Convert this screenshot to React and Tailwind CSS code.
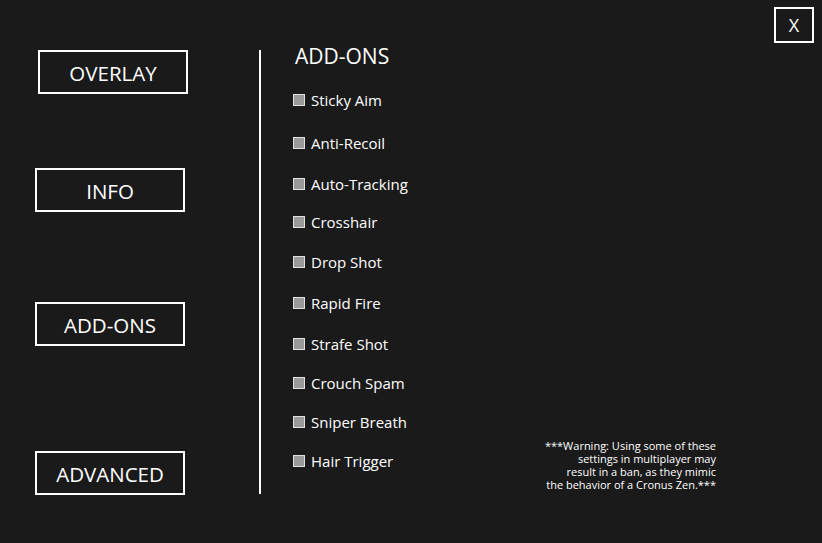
const navItems = [
  { label: 'OVERLAY', cls: 'mt-[50px] ml-[38px]' },
  { label: 'INFO', cls: 'mt-[74px] ml-[35px]' },
  { label: 'ADD-ONS', cls: 'mt-[90px] ml-[35px]' },
  { label: 'ADVANCED', cls: 'mt-[105px] ml-[35px]' },
]

const addons = [
  { label: 'Sticky Aim', cls: 'mt-[20px]' },
  { label: 'Anti-Recoil', cls: 'mt-[23px]' },
  { label: 'Auto-Tracking', cls: 'mt-[21px]' },
  { label: 'Crosshair', cls: 'mt-[18px]' },
  { label: 'Drop Shot', cls: 'mt-[20px]' },
  { label: 'Rapid Fire', cls: 'mt-[21px]' },
  { label: 'Strafe Shot', cls: 'mt-[21px]' },
  { label: 'Crouch Spam', cls: 'mt-[19px]' },
  { label: 'Sniper Breath', cls: 'mt-[19px]' },
  { label: 'Hair Trigger', cls: 'mt-[19px]' },
]

export default function App() {
  return (
    <div
      className="w-[822px] h-[543px] bg-[#1a1a1a] text-white flex overflow-hidden"
      style={{ fontFamily: '"Open Sans", "Noto Sans", sans-serif' }}
    >
      {/* nav */}
      <div className="w-[259px] flex flex-col">
        {navItems.map((n) => (
          <button
            key={n.label}
            className={`${n.cls} w-[150px] h-[44px] border-2 border-white flex items-center justify-center text-[20.5px] leading-none text-white pt-[2px]`}
          >
            {n.label}
          </button>
        ))}
      </div>

      <div className="w-[2px] h-[444px] mt-[50px] bg-white" />

      {/* add-ons list */}
      <div className="flex flex-col pt-[42px] pl-[32px]">
        <h1 className="ml-[2px] text-[21px] leading-[28px] font-normal">ADD-ONS</h1>
        {addons.map((a) => (
          <label key={a.label} className={`${a.cls} h-[20px] flex items-center`}>
            <span className="w-[12px] h-[12px] border border-[#e0e0e0] bg-[#9a9a9a] shrink-0" />
            <span className="ml-[6px] text-[15px] leading-[20px]">{a.label}</span>
          </label>
        ))}
      </div>

      {/* right side */}
      <div className="flex-1 flex flex-col items-end justify-between">
        <button className="mt-[7px] mr-[8px] w-[40px] h-[36px] border-2 border-white flex items-center justify-center text-[18px] leading-none">
          X
        </button>
        <p className="mr-[106px] mb-[52px] text-right text-[11px] leading-[13px]">
          ***Warning: Using some of these
          <br />
          settings in multiplayer may
          <br />
          result in a ban, as they mimic
          <br />
          the behavior of a Cronus Zen.***
        </p>
      </div>
    </div>
  )
}
